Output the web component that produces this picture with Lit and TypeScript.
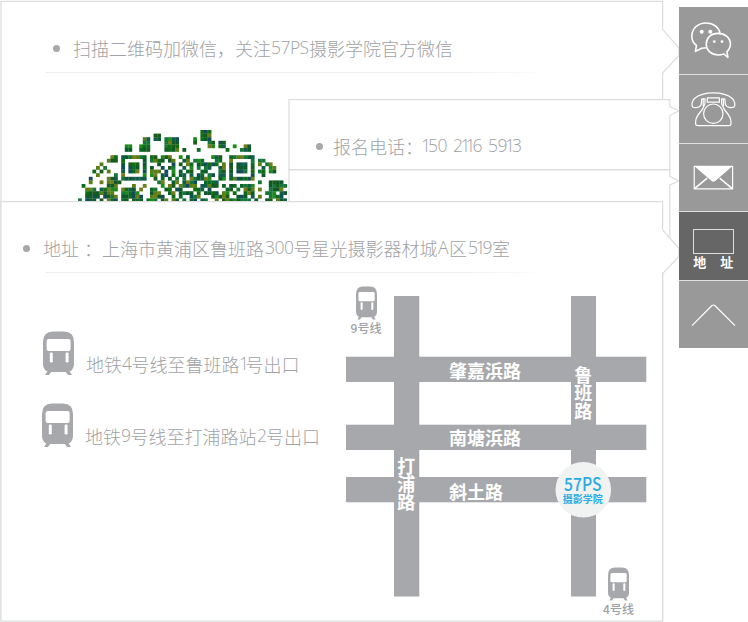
import { LitElement, html, css, svg } from "lit";
import { customElement, property } from "lit/decorators.js";

/* A run is plain CJK text, a gap in pixels, or a Latin piece with its own advances. */
type Run = string | number | { latin: string };

const QR = [
  "..................................###.....................",
  ".....................##...........###.....................",
  "..................##.##.####....#.###.....................",
  "..................##....####....#...##.##.................",
  ".............##..###....####........##.##..#..##..........",
  ".............##..###....####.#...#.......#...###..........",
  "..........................................................",
  ".........##.#######.##.###..#.#......###..#######.........",
  "........###.#.....#.####.##..##.###...##..#.....#.##......",
  "......#.....#.###.#...#...#.#.##.######.#.#.###.#.#.##....",
  ".....#.#....#.###.#.#..#.##..#.#.#.##..##.#.###.#..#.##...",
  "....#.#.#...#.###.#.###.#.#.#.##..##...##.#.###.#.##.##...",
  ".....#....#.#.....#.##.##.#.##.#.##.##.##.#.....#..#......",
  "...#....###.#######..#.#.#.#.#.######..##.#######.........",
  "...#..#.####..........##..##.####..####...........#..####.",
  ".#......###....#..#....#.##.#####.#####.#.##.####....#####",
  "..###.#####.####.#..##..##.##...###.#....##.#.###.#..####.",
  "..########..#####...###..##.####.#.####.##.#..###...###.##",
  "..####.####.######..####..#.#..###...#####..###.#.#..####.",
  "#.###.#.###.##.###.###.##.##.#.##.##..#.########.#..##.###",
];
const GREENS = ["#0b6b22", "#17773a", "#125c4b", "#0c5a2a", "#5b7d14", "#1d8a1d", "#0e5a2a", "#6f7d1a", "#124c58", "#0f6f0f", "#1a5c1a"];
const shade = (x: number, y: number) => GREENS[((x * 73 + y * 151 + x * y * 13 + ((x * x) >> 1)) % 97) % GREENS.length];

const train = () => html`<svg class="train" viewBox="0 0 31 44" preserveAspectRatio="none">
  <path d="M6 38 2 44H6L9.5 39H21.5L25 44H29L25 38Z" fill="#a7a8ac"/>
  <path d="M10 .5H21Q31 .5 31 11V33Q31 40 24 41H7Q0 40 0 33V11Q0 .5 10 .5Z" fill="#a7a8ac"/>
  <rect x="3.6" y="8" width="24" height="12" rx="2" fill="#fff"/>
  <rect x="6.8" y="21.5" width="3" height="10" rx="1.3" fill="#fff"/>
  <rect x="22.6" y="21.5" width="3" height="10" rx="1.3" fill="#fff"/>
</svg>`;

@customElement("text-line")
class TextLine extends LitElement {
  @property({ attribute: false }) runs: Run[] = [];
  static styles = css`
    :host { display: flex; height: 26px; align-items: center; white-space: pre;
      font: 300 18px/26px "Noto Sans CJK SC", sans-serif; color: #a0a2a5; }
    .latin { display: block; height: 26px; overflow: visible; fill: currentColor;
      font: 300 17.5px "Open Sans", "Noto Sans", sans-serif; }
  `;
  latin(text: string) {
    let pos = 0;
    const xs: number[] = [];
    for (const c of text) {
      const narrow = c === "1";
      xs.push(narrow ? pos - 2 : pos);
      pos += narrow ? 5 : c === "A" ? 11.5 : 9.5;
    }
    return html`<svg class="latin" width=${pos}><text x=${xs.join(" ")} y="18.6">${text}</text></svg>`;
  }
  render() {
    return this.runs.map((r) =>
      typeof r === "string" ? html`<span>${r}</span>`
      : typeof r === "number" ? html`<i style="width:${r}px"></i>`
      : this.latin(r.latin));
  }
}

@customElement("area-map")
class AreaMap extends LitElement {
  static styles = css`
    :host { display: block; position: relative; width: 302px; height: 335px; }
    .roads { display: block; width: 302px; height: 335px; }
    .road { fill: #a7a8ac; }
    .name { font: 700 18px "Noto Sans CJK SC", sans-serif; fill: #fff; }
    .down { writing-mode: vertical-rl; }
    .brand { font: 500 18px "Noto Sans CJK SC", sans-serif; fill: #29abe2; }
    .school { font: 700 10px "Noto Sans CJK SC", sans-serif; fill: #29abe2; }
    .station { position: absolute; display: flex; flex-direction: column; align-items: center;
      font: 500 12px/16px "Noto Sans CJK SC", sans-serif; color: #a0a1a5; width: 36px; }
    .nine { left: 2px; top: 0; }
    .four { left: 254.5px; top: 281px; }
    .train { width: 21px; height: 33.5px; display: block; }
  `;
  render() {
    return html`
      <svg class="roads" viewBox="346 286 302 335">
        <g class="road">
          <rect x="394" y="296" width="25.3" height="300.5"/>
          <rect x="571" y="296" width="25" height="300.5"/>
          <rect x="346" y="356.7" width="300.3" height="25.3"/>
          <rect x="346" y="424.7" width="300.3" height="25.3"/>
          <rect x="346" y="477" width="300.3" height="25.3"/>
        </g>
        <text class="name" x="449" y="377.5">肇嘉浜路</text>
        <text class="name" x="449" y="444.5">南塘浜路</text>
        <text class="name" x="449" y="498.5">斜土路</text>
        <text class="name down" x="583.3" y="366">鲁班路</text>
        <text class="name down" x="406.3" y="457">打浦路</text>
        <circle cx="583.3" cy="489.8" r="27.8" fill="#f1f2f2"/>
        <text class="brand" x="564" y="490.5" textLength="37.5" lengthAdjust="spacingAndGlyphs">57PS</text>
        <text class="school" x="562.8" y="503">摄影学院</text>
      </svg>
      <div class="station nine">${train()}<span>9号线</span></div>
      <div class="station four">${train()}<span>4号线</span></div>`;
  }
}

@customElement("side-bar")
class SideBar extends LitElement {
  static styles = css`
    :host { display: flex; flex-direction: column; gap: 1px; width: 68.5px; height: 341px; background: #e0e0e0; }
    .cell { flex: 1; background: #999; display: flex; flex-direction: column; align-items: center; }
    .active { background: #666; }
    .icon { width: 68px; height: 67px; display: block; fill: none; stroke: #fff; stroke-width: 1.2; stroke-linejoin: round; }
    .solid { fill: #fff; stroke: none; }
    .frame { box-sizing: border-box; width: 41px; height: 25px; margin-top: 16.5px; border: 1px solid #ddd; }
    .label { display: flex; gap: 14px; margin-top: -1px; font: 700 13px/18px "Noto Sans CJK SC", sans-serif; color: #fff; }
  `;
  render() {
    return html`
      <div class="cell"><svg class="icon" viewBox="0 0 68 67">
        <path stroke-width="1.6" d="M27.5 40.8 22.7 41.2 16.4 44.4 17.5 38.5C14 36 12.8 32.5 12.8 29 13 21.5 19 16 27 16 34.5 16 39.8 20.3 41 26.2"/>
        <path stroke-width="1.6" d="M39 26.4C32 26.4 27.3 31 27.3 37 27.3 43.5 32.5 48 39.2 48 41.5 48 43 47.6 44.7 46.9L48.9 50.3 47.9 44.7C50.3 42.5 51.4 40.2 51.4 37 51.4 31 46 26.4 39 26.4Z"/>
        <g class="solid"><circle cx="22.7" cy="24.8" r="2"/><circle cx="31.3" cy="24.8" r="2"/><circle cx="35.3" cy="34.6" r="1.4"/><circle cx="43" cy="34.6" r="1.4"/></g>
      </svg></div>
      <div class="cell"><svg class="icon" viewBox="0 0 68 67">
        <path d="M22.8 23.6C22.3 25 23 28 21.8 30.3 20.5 32.7 16.5 33 14 32.2 12.2 30.5 12.6 26.5 15.5 23.5 20 19.5 26 17.8 34.3 17.8 42.5 17.8 49 19.5 53.3 23.5 56.2 26.5 56.6 30.5 54.8 32.2 52 33 48 32.7 46.8 30.3 45.6 28 46.3 25 45.8 23.6"/>
        <path d="M22.8 23.8H26V26.5Q26.5 28.5 24.5 32C23 37 16.6 39.5 16.6 47V48.5Q16.6 50.7 19 50.7H49.8Q52 50.7 52 48.5V47C52 39.5 45.6 37 44.1 32Q42.1 28.5 42.6 26.5V23.8H45.8"/>
        <path d="M28.3 22.8H40.4V27.2H28.3Z"/><circle cx="34.3" cy="38.7" r="9.7"/>
        <path d="M24.2 24V31M44.4 24V31"/>
      </svg></div>
      <div class="cell"><svg class="icon" viewBox="0 0 68 67">
        <path d="M15.2 22.3H53.6V44.8H15.2Z"/><path class="solid" d="M15.2 22H53.6L36.8 36.4Q34.4 38.8 32 36.4Z"/>
        <path stroke-width="1.6" d="M15.5 44.6 28.2 34.2M53.3 44.6 40.6 34.2"/>
      </svg></div>
      <div class="cell active"><div class="frame"></div><div class="label"><span>地</span><span>址</span></div></div>
      <div class="cell"><svg class="icon" viewBox="0 0 68 67"><path d="M13 44.6 33 24.5Q34.4 23.5 35.8 24.5L56 44.6"/></svg></div>`;
  }
}

@customElement("app-root")
class AppRoot extends LitElement {
  static styles = css`
    :host { display: block; position: relative; width: 748px; height: 622px; overflow: hidden; background: #fff; }
    .panel { position: absolute; box-sizing: border-box; }
    .outline { position: absolute; inset: 0; width: 100%; height: 100%; overflow: visible; fill: #fff; stroke: #dcdddd; stroke-width: 1.2; }
    .body { position: relative; display: flex; flex-direction: column; }
    .wechat { left: 0; top: 0; width: 680px; height: 622px; }
    .wechat .body { padding: 35px 0 0 53px; }
    .phone { left: 288px; top: 99px; width: 392px; height: 71px; }
    .phone .body { padding: 34px 0 0 28px; }
    .mail { left: 288px; top: 169px; width: 392px; height: 90px; }
    .address { left: 0; top: 201px; width: 680px; height: 421px; }
    .address .body { padding: 34px 0 0 23px; }
    .heading { display: flex; align-items: center; }
    .dot { width: 7px; height: 7px; flex: none; border-radius: 50%; background: #a7a8ac; margin-right: 13px; }
    .phone .dot { margin-right: 10px; }
    .rule { width: 496px; height: 1px; background: linear-gradient(to right, #eee 85%, #fff); margin: 11px 0 0 -7px; }
    .address .rule { margin: 11px 0 0 23px; }
    .code { display: block; width: 208.8px; height: 72px; margin: 57px 0 0 25.4px; }
    .content { display: flex; margin-top: 13px; justify-content: space-between; width: 625px; }
    .routes { display: flex; flex-direction: column; gap: 28px; padding-top: 44.5px; }
    .route { display: flex; height: 44px; gap: 12.5px; padding-left: 19.5px; }
    .second { padding-left: 18.5px; }
    .route text-line { margin-top: 20px; }
    .train { width: 31px; height: 44px; }
    .side { position: absolute; left: 679px; top: 7px; }
  `;
  render() {
    return html`
      <section class="panel wechat">
        <svg class="outline" viewBox="0 0 680 622"><path d="M1 1.3H662.6V29.3L679 48V55.5L662.6 73V621H1Z"/></svg>
        <div class="body">
          <div class="heading"><i class="dot"></i><text-line .runs=${["扫描二维码加微信，关注", { latin: "57PS" }, "摄影学院官方微信"] as Run[]}></text-line></div>
          <div class="rule"></div>
          <svg class="code" viewBox="0 0 58 20" preserveAspectRatio="none">
            ${QR.map((row, y) => [...row].map((c, x) => c === "#"
              ? svg`<rect x=${x} y=${y} width="1.06" height="1.06" fill=${shade(x, y)}/>` : null))}
          </svg>
        </div>
      </section>
      <section class="panel mail">
        <svg class="outline" viewBox="0 0 392 90"><path d="M1 .6H381.8V7.3L391 12 381.8 16V90H1Z"/></svg>
      </section>
      <section class="panel phone">
        <svg class="outline" viewBox="0 0 392 71"><path d="M1 .6H381.8V7.5L391 11.8 381.8 16.5V70.6H1Z"/></svg>
        <div class="body"><div class="heading"><i class="dot"></i>
          <text-line .runs=${["报名电话：", { latin: "150" }, 6, { latin: "2116" }, 6, { latin: "5913" }] as Run[]}></text-line></div></div>
      </section>
      <section class="panel address">
        <svg class="outline" viewBox="0 0 680 421"><path d="M1 .6H662.6V29L679 47.5V55.5L662.6 72.5V420H1Z"/></svg>
        <div class="body">
          <div class="heading"><i class="dot"></i><text-line .runs=${["地址", 5, "：", "上海市黄浦区鲁班路", 0.5, { latin: "300" }, 0.5, "号星光摄影器材城", { latin: "A" }, "区", 1, { latin: "519" }, "室"] as Run[]}></text-line></div>
          <div class="rule"></div>
          <div class="content">
            <div class="routes">
              <div class="route">${train()}<text-line .runs=${["地铁", { latin: "4" }, "号线至鲁班路", 1, { latin: "1" }, "号出口"] as Run[]}></text-line></div>
              <div class="route second">${train()}<text-line .runs=${["地铁", { latin: "9" }, "号线至打浦路站", { latin: "2" }, "号出口"] as Run[]}></text-line></div>
            </div>
            <area-map></area-map>
          </div>
        </div>
      </section>
      <side-bar class="side"></side-bar>`;
  }
}
